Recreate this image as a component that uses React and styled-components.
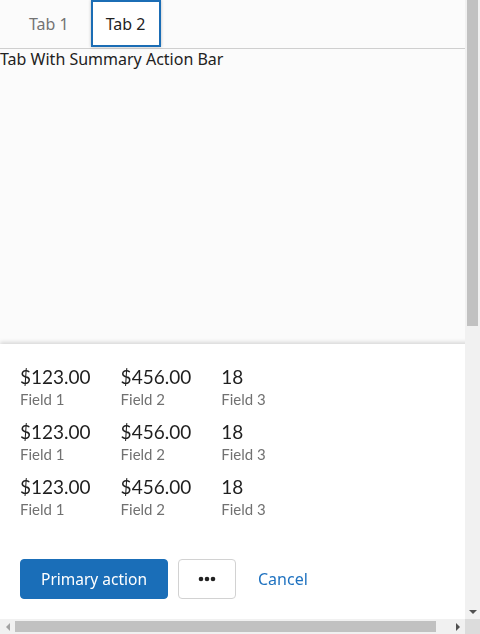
import React from 'react';
import styled, { createGlobalStyle } from 'styled-components';

const GlobalStyle = createGlobalStyle`
	html, body {
		margin: 0;
		padding: 0;
		background: #fff;
	}
	body {
		font-family: "Noto Sans", "Open Sans", sans-serif;
		color: #222;
	}
`

const summaryRows = [
	[
		{ value: '$123.00', label: 'Field 1' },
		{ value: '$456.00', label: 'Field 2' },
		{ value: '18', label: 'Field 3' },
	],
	[
		{ value: '$123.00', label: 'Field 1' },
		{ value: '$456.00', label: 'Field 2' },
		{ value: '18', label: 'Field 3' },
	],
	[
		{ value: '$123.00', label: 'Field 1' },
		{ value: '$456.00', label: 'Field 2' },
		{ value: '18', label: 'Field 3' },
	],
]

const MoreIcon = () => (
	<svg width="18" height="6" viewBox="0 0 18 6">
		<circle cx="3" cy="3" r="2.3" fill="#222" />
		<circle cx="9" cy="3" r="2.3" fill="#222" />
		<circle cx="15" cy="3" r="2.3" fill="#222" />
	</svg>
)

// little triangles for the scrollbar buttons
const Arrow = ({ dir, color }) => {
	const paths = {
		down: 'M0 0h8L4 4z',
		left: 'M4 0v8L0 4z',
		right: 'M0 0v8l4-4z',
	}
	const size = dir === 'down' ? { width: 8, height: 4 } : { width: 4, height: 8 }
	return (
		<svg {...size} viewBox={`0 0 ${size.width} ${size.height}`}>
			<path d={paths[dir]} fill={color} />
		</svg>
	)
}

const App = () => {
	return (
		<Frame>
			<GlobalStyle />
			<Pane>
				<Page>
					<TabList>
						<Tab>Tab 1</Tab>
						<Tab active>Tab 2</Tab>
					</TabList>
					<Panel>
						<PanelTitle>Tab With Summary Action Bar</PanelTitle>
					</Panel>
					<ActionBar>
						<Summary>
							{summaryRows.map((row, i) => (
								<SummaryRow key={i}>
									{row.map((field) => (
										<Field key={field.label}>
											<Value>{field.value}</Value>
											<Label>{field.label}</Label>
										</Field>
									))}
								</SummaryRow>
							))}
						</Summary>
						<Actions>
							<Button primary>Primary action</Button>
							<Button aria-label="More actions"><MoreIcon /></Button>
							<LinkButton>Cancel</LinkButton>
						</Actions>
					</ActionBar>
				</Page>
			</Pane>
			<ScrollTrack vertical>
				<Thumb vertical />
				<ScrollButton><Arrow dir="down" color="#505050" /></ScrollButton>
			</ScrollTrack>
			<ScrollTrack>
				<ScrollButton><Arrow dir="left" color="#a3a3a3" /></ScrollButton>
				<Thumb />
				<ScrollButton><Arrow dir="right" color="#505050" /></ScrollButton>
			</ScrollTrack>
			<Corner />
		</Frame>
	);
};

const Frame = styled.div`
	display: grid;
	grid-template-columns: 465px 15px;
	grid-template-rows: 619px 15px;
	width: 480px;
	height: 634px;
	overflow: hidden;
`

const Pane = styled.div`
	overflow: hidden;
	background: #fbfbfb;
`

const ScrollTrack = styled.div`
	display: flex;
	flex-direction: ${(p) => (p.vertical ? 'column' : 'row')};
	justify-content: space-between;
	background: #f1f1f1;
`

const Thumb = styled.div`
	background: #c1c1c1;
	${(p) => (p.vertical
		? 'width: 11px; height: 326px; margin: 0 2px;'
		: 'height: 11px; width: 421px; margin: 2px 0; flex: none;')}
	margin-right: ${(p) => (p.vertical ? '2px' : 'auto')};
`

const ScrollButton = styled.div`
	display: flex;
	align-items: center;
	justify-content: center;
	width: 15px;
	height: 15px;
	flex: none;
`

const Corner = styled.div`
	background: #dcdcdc;
`

const Page = styled.div`
	width: 480px;
	height: 100%;
	min-height: 1180px;
	display: flex;
	flex-direction: column;
`

const TabList = styled.div`
	display: flex;
	gap: 7px;
	height: 48px;
	padding-left: 14px;
	border-bottom: 1px solid #cfcfcf;
`

const Tab = styled.button`
	display: flex;
	align-items: center;
	height: 47px;
	padding: 0 15px;
	border: none;
	border-radius: 0;
	background: ${(p) => (p.active ? '#fff' : 'transparent')};
	box-shadow: ${(p) => (p.active ? 'inset 0 0 0 2px #1b6db5, 0 0 3px rgba(0,0,0,0.25)' : 'none')};
	font-family: "Noto Sans", "Open Sans", sans-serif;
	font-size: 16px;
	color: ${(p) => (p.active ? '#222' : '#737373')};
	cursor: pointer;
`

const Panel = styled.div`
	flex: 1;
`

const PanelTitle = styled.div`
	font-size: 16px;
	line-height: 19px;
	padding-top: 1px;
	color: #222;
`

const ActionBar = styled.div`
	position: sticky;
	bottom: 0;
	background: #fff;
	box-shadow: 0 -2px 4px rgba(0, 0, 0, 0.14);
	padding: 21px 20px 20px;
`

const Summary = styled.div`
	display: flex;
	flex-direction: column;
	gap: 11px;
`

const SummaryRow = styled.div`
	display: flex;
	gap: 30px;
`

const Field = styled.div`
	display: flex;
	flex-direction: column;
`

const Value = styled.div`
	font-family: Lato, "Open Sans", sans-serif;
	font-size: 19px;
	line-height: 24px;
	color: #1f1f1f;
`

const Label = styled.div`
	font-family: Lato, "Open Sans", sans-serif;
	font-size: 15px;
	line-height: 20px;
	color: #717171;
`

const Actions = styled.div`
	display: flex;
	align-items: center;
	gap: 10px;
	margin-top: 40px;
`

const Button = styled.button`
	display: flex;
	align-items: center;
	justify-content: center;
	height: 40px;
	padding: 0 ${(p) => (p.primary ? '20px' : '19px')};
	border-radius: 4px;
	border: 1px solid ${(p) => (p.primary ? '#1a6eb8' : '#d2d2d2')};
	background: ${(p) => (p.primary ? '#1a6eb8' : '#fff')};
	color: ${(p) => (p.primary ? '#fff' : '#222')};
	font-family: "Noto Sans", "Open Sans", sans-serif;
	font-size: 15.5px;
	cursor: pointer;
`

const LinkButton = styled.button`
	border: none;
	background: none;
	padding: 0 12px;
	color: #1f72c0;
	font-family: "Noto Sans", "Open Sans", sans-serif;
	font-size: 16px;
	cursor: pointer;
`

export default App;
